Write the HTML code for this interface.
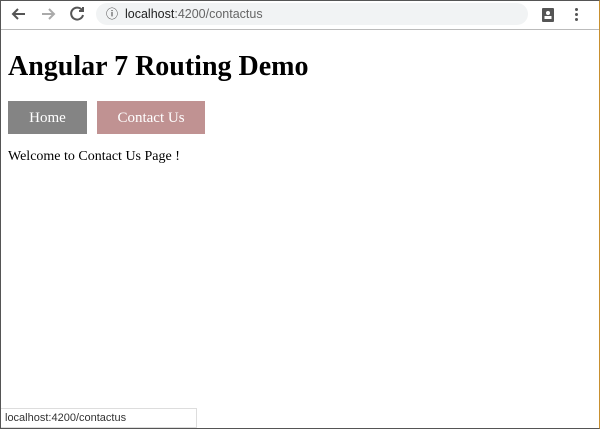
<!DOCTYPE html>
<html><head><style>
body{margin:0;width:600px;height:429px;position:relative;background:#fff;font-family:"Liberation Serif",serif;overflow:hidden}
.frame{position:absolute;inset:0;border:1px solid #555;border-right:1px solid #c89030;pointer-events:none}
.bar{position:absolute;left:0;top:0;width:600px;height:29px;background:#fff;border-bottom:1px solid #bbb}
.url{position:absolute;left:96px;top:3px;width:432px;height:22px;border-radius:11px;background:#f1f3f4;font-family:"Liberation Sans",sans-serif;font-size:12.5px;line-height:22px;color:#222}
h1{position:absolute;left:8px;top:51px;margin:0;font-size:28px;font-weight:bold}
.b{position:absolute;top:101px;height:33px;color:#fff;font-size:15px;line-height:35px;text-align:center}
p{position:absolute;left:8px;top:149px;margin:0;font-size:14px}
.st{position:absolute;left:0;top:408px;width:197px;height:20px;border:1px solid #ddd;background:#fff;font-family:"Liberation Sans",sans-serif;font-size:11px;line-height:19px;color:#333;padding-left:4px;box-sizing:border-box}
</style></head><body>
<div class="bar">
<svg width="90" height="29" style="position:absolute;left:0;top:0" stroke-width="2" fill="none">
<path d="M25 14H13M18 9l-5 5 5 5" stroke="#555"/>
<path d="M42 14h12M49 9l5 5-5 5" stroke="#aaa"/>
<path d="M82 10a6 6 0 1 0 1 5" stroke="#555"/><path d="M83 7v4h-4" stroke="#555"/>
</svg>
<div class="url"><span style="position:absolute;left:10px;top:0;font-size:12px">ⓘ</span><span style="position:absolute;left:29px">localhost<span style="color:#666">:4200/contactus</span></span></div>
<svg width="14" height="16" style="position:absolute;left:541px;top:6px"><rect x="1" y="2" width="12" height="14" rx="1" fill="#555"/><circle cx="7" cy="7" r="2" fill="#fff"/><rect x="3.5" y="10" width="7" height="3" fill="#fff"/></svg>
<div style="position:absolute;left:575px;top:8px;width:3px;height:3px;background:#555;border-radius:2px;box-shadow:0 5px #555,0 10px #555"></div>
</div>
<h1>Angular 7 Routing Demo</h1>
<div class="b" style="left:8px;width:79px;background:#848484">Home</div>
<div class="b" style="left:97px;width:108px;background:#c09292">Contact Us</div>
<p>Welcome to Contact Us Page !</p>
<div class="st">localhost:4200/contactus</div>
<div class="frame"></div>
</body></html>
